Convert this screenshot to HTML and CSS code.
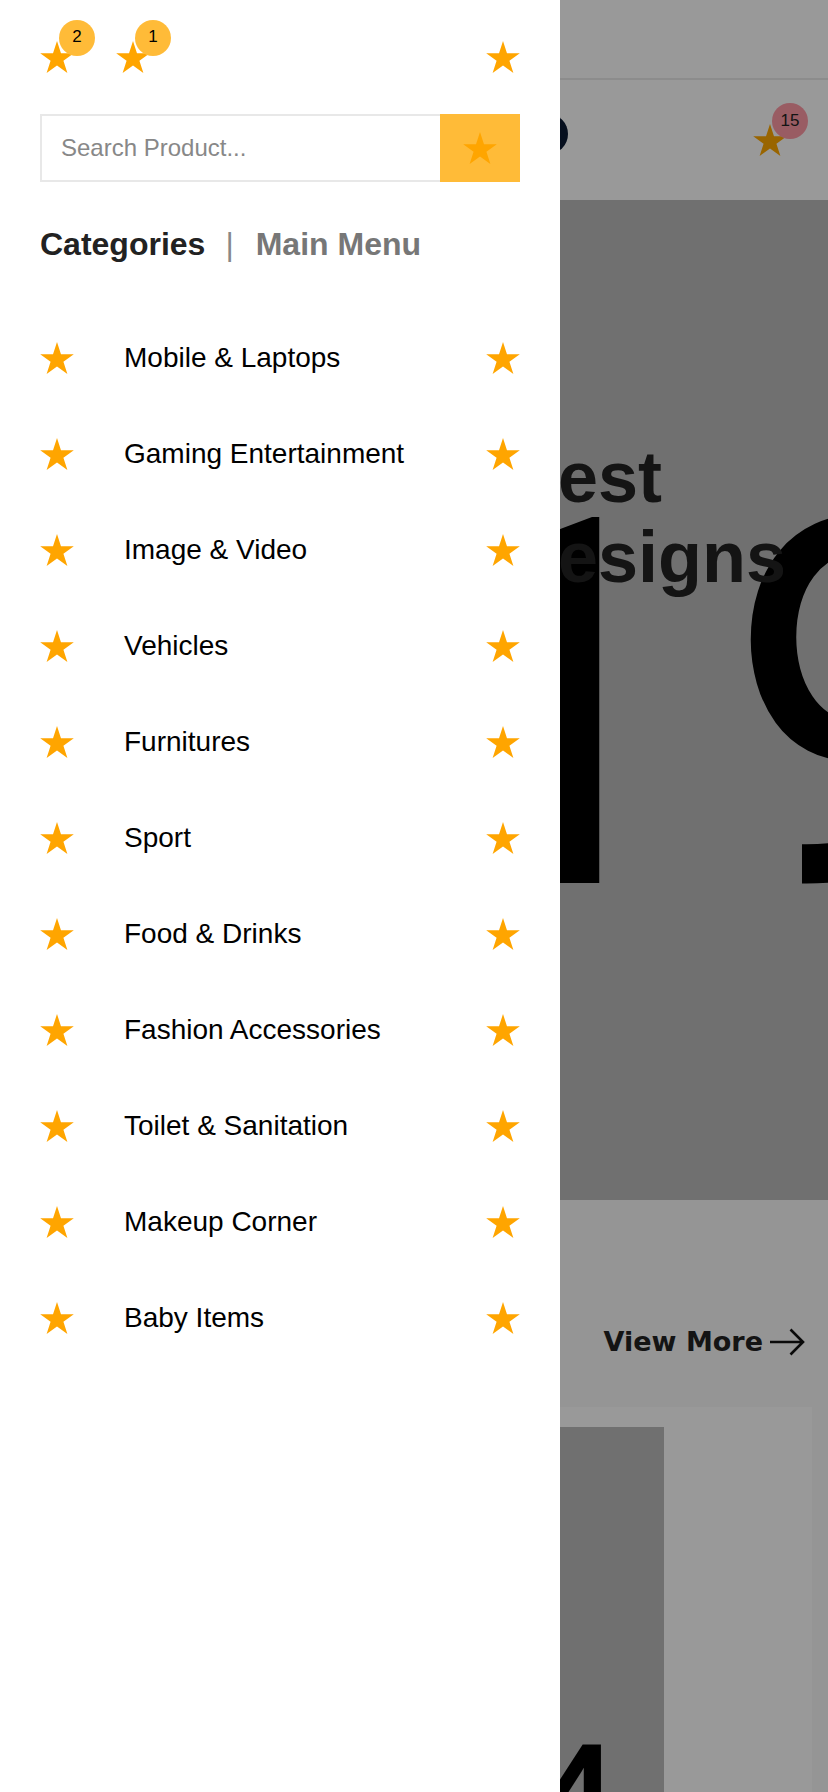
FILE: index.html
```html
<!DOCTYPE html>
<html lang="en">
<head>
<meta charset="utf-8">
<title>Shop – Categories</title>
<link rel="stylesheet" href="styles.css">
</head>
<body>
<svg class="defs" width="0" height="0" aria-hidden="true">
  <symbol id="star" viewBox="0 0 34 32.4">
    <polygon points="17,0 21.02,12.35 34,12.35 23.5,19.99 27.51,32.35 17,24.71 6.49,32.35 10.5,19.99 0,12.35 12.98,12.35"/>
  </symbol>
</svg>

<div class="page">
  <div class="topbar"></div>
  <header class="header">
    <div class="logo-mark"></div>
    <div class="cart">
      <svg class="star"><use href="#star"></use></svg>
      <span class="cart-badge">15</span>
    </div>
  </header>
  <section class="hero">
    <div class="hero-num">19</div>
    <h1 class="hero-title">Best<br>Designs</h1>
  </section>
  <section class="products">
    <div class="products-head">
      <a class="view-more" href="#">View More
        <svg class="arrow" viewBox="0 0 36 28"><path d="M1 14H34M21.5 1.5L34 14L21.5 26.5"/></svg>
      </a>
    </div>
    <div class="cards">
      <div class="card">
        <div class="card-img"><span class="card-num">4</span></div>
      </div>
    </div>
  </section>
</div>

<div class="overlay"></div>

<aside class="drawer">
  <div class="drawer-top">
    <div class="icon-wrap">
      <svg class="star"><use href="#star"></use></svg>
      <span class="badge">2</span>
    </div>
    <div class="icon-wrap">
      <svg class="star"><use href="#star"></use></svg>
      <span class="badge">1</span>
    </div>
    <div class="icon-wrap close">
      <svg class="star"><use href="#star"></use></svg>
    </div>
  </div>

  <form class="search">
    <input class="search-input" type="text" placeholder="Search Product...">
    <button class="search-btn" type="button"><svg class="star"><use href="#star"></use></svg></button>
  </form>

  <div class="tabs">
    <span class="tab active">Categories</span>
    <span class="tab-sep">|</span>
    <span class="tab">Main Menu</span>
  </div>

  <ul class="cat-list">
    <li class="cat"><svg class="star"><use href="#star"></use></svg><span class="cat-name">Mobile &amp; Laptops</span><svg class="star"><use href="#star"></use></svg></li>
    <li class="cat"><svg class="star"><use href="#star"></use></svg><span class="cat-name">Gaming Entertainment</span><svg class="star"><use href="#star"></use></svg></li>
    <li class="cat"><svg class="star"><use href="#star"></use></svg><span class="cat-name">Image &amp; Video</span><svg class="star"><use href="#star"></use></svg></li>
    <li class="cat"><svg class="star"><use href="#star"></use></svg><span class="cat-name">Vehicles</span><svg class="star"><use href="#star"></use></svg></li>
    <li class="cat"><svg class="star"><use href="#star"></use></svg><span class="cat-name">Furnitures</span><svg class="star"><use href="#star"></use></svg></li>
    <li class="cat"><svg class="star"><use href="#star"></use></svg><span class="cat-name">Sport</span><svg class="star"><use href="#star"></use></svg></li>
    <li class="cat"><svg class="star"><use href="#star"></use></svg><span class="cat-name">Food &amp; Drinks</span><svg class="star"><use href="#star"></use></svg></li>
    <li class="cat"><svg class="star"><use href="#star"></use></svg><span class="cat-name">Fashion Accessories</span><svg class="star"><use href="#star"></use></svg></li>
    <li class="cat"><svg class="star"><use href="#star"></use></svg><span class="cat-name">Toilet &amp; Sanitation</span><svg class="star"><use href="#star"></use></svg></li>
    <li class="cat"><svg class="star"><use href="#star"></use></svg><span class="cat-name">Makeup Corner</span><svg class="star"><use href="#star"></use></svg></li>
    <li class="cat"><svg class="star"><use href="#star"></use></svg><span class="cat-name">Baby Items</span><svg class="star"><use href="#star"></use></svg></li>
  </ul>
</aside>
</body>
</html>
```

FILE: styles.css
```css
* {
  box-sizing: border-box;
  margin: 0;
  padding: 0;
}

html,
body {
  width: 828px;
  height: 1792px;
  overflow: hidden;
}

body {
  font-family: "Liberation Sans", Arial, sans-serif;
  background: #ffffff;
  color: #000000;
}

.defs {
  position: absolute;
  width: 0;
  height: 0;
}

.star {
  display: block;
  width: 34px;
  height: 32px;
  fill: #ffa500;
  flex: none;
}

/* ---------- background page ---------- */
.page {
  width: 828px;
}

.topbar {
  height: 80px;
  border-bottom: 2px solid #e9e9e9;
}

.header {
  height: 120px;
  display: flex;
  align-items: center;
  padding-right: 41px;
}

.logo-mark {
  width: 40px;
  height: 40px;
  margin-left: 528px;
  margin-top: -12px;
  border-radius: 50%;
  background: #0a1a33;
}

.cart {
  position: relative;
  margin-left: auto;
}

.cart .star {
  fill: #ffa800;
}

.cart-badge {
  position: absolute;
  left: 19px;
  top: -21px;
  width: 36px;
  height: 36px;
  border-radius: 50%;
  background: #ff9aa6;
  color: #222;
  font-size: 17px;
  line-height: 36px;
  text-align: center;
}

.hero {
  height: 1000px;
  background: #bbbbbb;
  display: grid;
  overflow: hidden;
}

.hero-num {
  grid-area: 1 / 1;
  align-self: start;
  margin: 252px 0 0 417px;
  font-family: Roboto, sans-serif;
  font-size: 512px;
  line-height: 1;
  letter-spacing: 21px;
  color: #000;
  white-space: nowrap;
}

.hero-title {
  grid-area: 1 / 1;
  align-self: start;
  margin: 237px 0 0 506px;
  font-size: 72px;
  line-height: 80px;
  font-weight: 700;
  color: #222;
}

.products {
  background: #f8f8f8;
  height: 592px;
}

.products-head {
  height: 207px;
  display: flex;
  align-items: flex-end;
  justify-content: flex-end;
  padding: 0 23px 50px 0;
}

.view-more {
  display: flex;
  align-items: center;
  gap: 6px;
  font-family: "DejaVu Sans", sans-serif;
  font-weight: 700;
  font-size: 27px;
  color: #222;
  text-decoration: none;
}

.arrow {
  width: 36px;
  height: 28px;
  fill: none;
  stroke: #111;
  stroke-width: 2.6;
}

.cards {
  display: flex;
  justify-content: flex-end;
  padding-right: 16px;
}

.card {
  width: 482px;
  background: #ffffff;
  padding: 20px 148px 0 0;
}

.card-img {
  height: 420px;
  background: #bbbbbb;
  text-align: right;
  padding: 292px 40px 0 0;
  overflow: hidden;
}

.card-num {
  font-family: Roboto, sans-serif;
  font-size: 190px;
  line-height: 1;
  color: #000;
}

/* ---------- overlay + drawer ---------- */
.overlay {
  position: fixed;
  inset: 0;
  z-index: 10;
  background: rgba(0, 0, 0, 0.4);
}

.drawer {
  position: fixed;
  top: 0;
  left: 0;
  bottom: 0;
  z-index: 11;
  width: 560px;
  background: #ffffff;
  padding: 41px 40px 0 40px;
}

.drawer-top {
  display: flex;
  align-items: center;
  height: 32px;
}

.icon-wrap {
  position: relative;
  width: 34px;
  height: 32px;
}

.icon-wrap + .icon-wrap {
  margin-left: 42px;
}

.icon-wrap.close {
  margin-left: auto;
}

.badge {
  position: absolute;
  left: 19px;
  top: -21px;
  width: 36px;
  height: 36px;
  border-radius: 50%;
  background: #ffbb38;
  color: #000;
  font-size: 17px;
  line-height: 34px;
  text-align: center;
}

.search {
  display: flex;
  height: 68px;
  margin-top: 41px;
}

.search-input {
  flex: 1;
  min-width: 0;
  border: 2px solid #e8e8e8;
  border-right: 0;
  padding: 0 0 0 19px;
  font-family: "Liberation Sans", Arial, sans-serif;
  font-size: 24px;
  color: #333;
  outline: none;
  background: #fff;
}

.search-input::placeholder {
  color: #888888;
  opacity: 1;
}

.search-btn {
  width: 80px;
  border: 0;
  background: #ffbb38;
  display: flex;
  align-items: center;
  justify-content: center;
}

.tabs {
  display: flex;
  align-items: baseline;
  margin-top: 44px;
  font-size: 32px;
  line-height: 37px;
  font-weight: 700;
}

.tab {
  color: #777777;
}

.tab.active {
  color: #222222;
}

.tab-sep {
  font-weight: 400;
  color: #888888;
  margin: 0 22px 0 20px;
}

.cat-list {
  list-style: none;
  margin-top: 47px;
}

.cat {
  height: 96px;
  display: flex;
  align-items: center;
}

.cat-name {
  flex: 1;
  margin-left: 50px;
  font-size: 28px;
  line-height: 32px;
  color: #000;
}
```
